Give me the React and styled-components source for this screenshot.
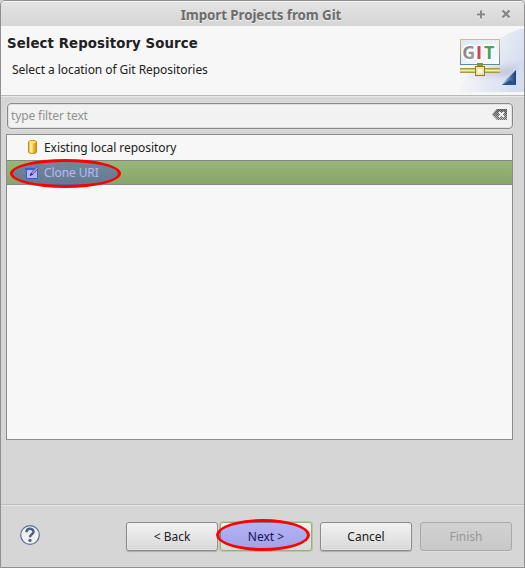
import React from "react";
import styled, { createGlobalStyle, css } from "styled-components";

const Global = createGlobalStyle`
  * { box-sizing: border-box; }
  html, body { margin: 0; padding: 0; background: #d6d6d6; }
`;

const Window = styled.main`
  width: 525px;
  height: 568px;
  display: flex;
  flex-direction: column;
  overflow: hidden;
  border: 1px solid #8f8f8f;
  border-radius: 5px 5px 0 0;
  background: #d6d6d6;
  color: #212121;
  font: 12px/18px "Noto Sans", sans-serif;
  letter-spacing: -0.06px;
`;

const TitleBar = styled.header`
  flex: none;
  height: 25px;
  display: grid;
  grid-template-columns: 1fr auto 1fr;
  align-items: center;
  padding: 2px 11px 0 8px;
  border-top: 1px solid #f6f6f6;
  background: linear-gradient(#e4e4e4, #d5d5d5);
`;

const Title = styled.h1`
  grid-column: 2;
  margin: 0;
  color: #6c6c6c;
  font-size: 13.3px;
  line-height: 20px;
  font-weight: 700;
  letter-spacing: -0.05px;
  text-shadow: 0 1px #f1f1f1;
`;

const WindowControls = styled.div`
  display: flex;
  justify-content: flex-end;
  gap: 11px;
`;

const Banner = styled.section`
  flex: none;
  height: 71px;
  display: flex;
  justify-content: space-between;
  background: #f7f7f7;
  border-bottom: 1px solid #e9e9e9;
  box-shadow: inset 0 -1px #bababa;
`;

const BannerText = styled.div`
  padding: 9px 0 0 6px;
`;

const Heading = styled.h2`
  margin: 0;
  font: 700 13.3px/18px "DejaVu Sans", sans-serif;
  letter-spacing: 0.1px;
`;

const Description = styled.p`
  margin: 8px 0 0 5px;
  line-height: 18px;
`;

const Filter = styled.div`
  flex: none;
  height: 26px;
  margin: 6px 11px 0 6px;
  padding: 0 4px 0 3px;
  display: flex;
  align-items: center;
  justify-content: space-between;
  border: 1px solid #898989;
  border-radius: 4px;
  background: #f2f2f2;
  box-shadow: inset 0 0 0 1px #e2e2e2, 0 0 0 1px #dedede;
  color: #919191;
  letter-spacing: -0.12px;
`;

const Tree = styled.div`
  flex: none;
  height: 306px;
  margin: 5px 11px 0 5px;
  border: 1px solid #8c8c8c;
  background: #f7f7f7;
`;

const TreeRow = styled.div`
  position: relative;
  height: 25px;
  display: flex;
  align-items: center;
  gap: 5px;
  padding-left: 18px;
  ${(p) => p.$selected && css`
    border-top: 1px solid #858585;
    border-bottom: 1px solid #858585;
    background: linear-gradient(#98b77b, #88a56a);
    color: #f7f7f7;
    letter-spacing: -0.1px;
  `}
`;

const Footer = styled.footer`
  margin-top: auto;
  height: 63px;
  display: flex;
  align-items: flex-start;
  padding: 17px 12px 0 18px;
  border-top: 1px solid #bdbdbd;
  box-shadow: inset 0 1px #e6e6e6;
`;

const HelpButton = styled.span`
  padding-top: 2px;
`;

const Buttons = styled.div`
  margin-left: auto;
  display: flex;
`;

const Button = styled.button`
  position: relative;
  width: 92px;
  height: 29px;
  margin: 0 0 0 ${(p) => p.$gap || 0}px;
  padding: 0;
  border: 1px solid #8c8c8c;
  border-radius: 3px;
  background: linear-gradient(#f2f2f2, #d9d9d9);
  box-shadow: inset 0 0 0 1px #f0f0f066, 0 1px 1px #aaa;
  color: #212121;
  font: 12px/18px "Noto Sans", sans-serif;
  ${(p) => p.$focused && css`
    border-color: #9aad83;
    box-shadow: 0 0 0 1px #b1cd94;
  `}
  &:disabled {
    border-color: #a9a9a9;
    background: linear-gradient(#d1d1d1, #c9c9c9);
    box-shadow: 0 1px #dfdfdf;
    color: #979797;
  }
`;

const Highlight = styled.span`
  position: absolute;
  z-index: 2;
  left: ${(p) => p.$x}px;
  top: ${(p) => p.$y}px;
  width: ${(p) => p.$w}px;
  height: ${(p) => p.$h}px;
  border: 3px solid #f00;
  border-radius: 50%;
  background: rgba(0, 0, 255, 0.26);
  pointer-events: none;
`;

const Icon = styled.svg`
  flex: none;
  display: block;
`;

const BannerArt = () => (
  <Icon width="67" height="66" viewBox="-1 0 67 66">
    <defs>
      <linearGradient id="sky" x1="0" x2="1" y1=".3" y2=".6">
        <stop offset="0" stopColor="#e4e9f6" stopOpacity="0" />
        <stop offset="1" stopColor="#d3dcf0" />
      </linearGradient>
      <linearGradient id="screen" x1="0" y1="0" x2="1" y2="1">
        <stop stopColor="#dbe8f4" /><stop offset="1" stopColor="#fbfcfe" />
      </linearGradient>
      <linearGradient id="frame" x1="0" y1="0" x2="0" y2="1">
        <stop stopColor="#e5b876" /><stop offset="1" stopColor="#608c8c" />
      </linearGradient>
      <linearGradient id="corner" x1="0" y1="0" x2="1" y2="0">
        <stop stopColor="#b9dcf3" /><stop offset=".55" stopColor="#5582b6" /><stop offset="1" stopColor="#203d7a" />
      </linearGradient>
      <linearGradient id="silver" x1="0" y1="0" x2="1" y2="1">
        <stop stopColor="#777" /><stop offset="1" stopColor="#aaa" />
      </linearGradient>
      <filter id="soft" x="-30%" y="-100%" width="160%" height="300%"><feGaussianBlur stdDeviation="3" /></filter>
    </defs>
    <path d="M0 66C10 48 32 8 67 2V66Z" fill="url(#sky)" />
    <path d="M15 66C25 40 43 27 67 22V66Z" fill="url(#sky)" opacity=".6" />
    <path d="M5 49L48 41L62 38L52 50Z" fill="#a8a0bd" opacity=".45" filter="url(#soft)" />
    <rect x="2.5" y="13.5" width="39" height="25" fill="url(#screen)" stroke="url(#frame)" />
    <g fontFamily="Noto Sans, sans-serif" fontWeight="700" fontSize="18">
      <g stroke="#fff" strokeWidth="3" paintOrder="stroke">
        <text x="4.3" y="33" fill="url(#silver)">G</text>
        <text x="26" y="33" fill="#4aa25b">T</text>
      </g>
      <rect x="18.5" y="19" width="5" height="15" fill="#fff" />
      <rect x="19.5" y="20" width="3" height="13" fill="#bd4f58" />
    </g>
    <path d="M19 38.5H25" stroke="#968c3a" strokeWidth="3" />
    <path d="M2 44.5H42" stroke="#a99b36" strokeWidth="5" />
    <path d="M2 44.5H42" stroke="#f0ecb8" strokeWidth="2" />
    <rect x="17.5" y="40.5" width="9" height="9" fill="#fff3bd" stroke="#8b793c" />
    <rect x="19" y="42" width="6" height="6" fill="#fffbe5" stroke="#e9d28a" />
    <path d="M43 59L58 44V59Z" fill="url(#corner)" />
    <path d="M44 59L52 54L58 58V59Z" fill="#294f8c" />
  </Icon>
);

const ClearIcon = () => (
  <Icon width="16" height="14" viewBox="0 0 16 14">
    <defs>
      <pattern id="dots" width="2" height="2" patternUnits="userSpaceOnUse">
        <path d="M0 0h1v1H0zM1 1h1v1H1z" fill="#222" />
      </pattern>
      <linearGradient id="shade" x1="0" x2="0" y1="0" y2="1"><stop stopColor="#333" /><stop offset="1" stopColor="#aaa" /></linearGradient>
    </defs>
    <path d="M0 5.5L5 0H15V11H5Z" fill="url(#shade)" opacity=".6" />
    <path d="M0 5.5L5 0H15V11H5Z" fill="url(#dots)" opacity=".55" />
    <path d="M7 3L12 8M12 3L7 8" stroke="#f4f4f4" strokeWidth="2" />
  </Icon>
);

const RepositoryIcon = () => (
  <Icon width="14" height="16" viewBox="0 0 14 16">
    <defs>
      <linearGradient id="gold"><stop stopColor="#dda925" /><stop offset=".3" stopColor="#fff4ac" /><stop offset=".65" stopColor="#edbb2c" /><stop offset="1" stopColor="#c98911" /></linearGradient>
    </defs>
    <path d="M3.5 2Q3.5 .5 7.5 .5T11.5 2V12Q11.5 13.5 7.5 13.5T3.5 12Z" fill="url(#gold)" stroke="#c48b18" />
    <ellipse cx="7.5" cy="2.2" rx="3.3" ry="1.2" fill="#ffe56d" />
  </Icon>
);

const CloneIcon = () => (
  <Icon width="14" height="16" viewBox="0 0 14 16">
    <path d="M1.5 3.5H12.5V13.5H1.5Z" fill="#f4f6ff" stroke="#4e78bb" />
    <path d="M0 3H9V5H0Z" fill="#477ed1" />
    <path d="M5.5 10.5L6.5 7.5L12 1.5L13.7 3L8.5 8.8Z" fill="#dac6c6" stroke="#75656f" strokeWidth=".8" />
    <path d="M4.5 11L6 8L8.2 9.5Z" fill="#3d354b" />
  </Icon>
);

const HelpIcon = () => (
  <Icon width="22" height="22" viewBox="0 0 22 22">
    <circle cx="11" cy="11" r="9.3" fill="#f0f0f0" stroke="#596f93" strokeWidth="1.2" />
    <path d="M7.5 8.3C7.5 3.7 14.5 3.8 14.5 7.8C14.5 10.4 11 10.3 11 13.3" fill="none" stroke="#4b618a" strokeWidth="2.5" />
    <circle cx="11" cy="16.4" r="1.6" fill="#4b618a" />
  </Icon>
);

export default function App() {
  return (
    <>
      <Global />
      <Window>
        <TitleBar>
          <Title>Import Projects from Git</Title>
          <WindowControls>
            <Icon width="14" height="14" viewBox="0 0 14 14"><path d="M3 7.5H11M7 3.5V11.5" stroke="#f2f2f2" strokeWidth="2" /><path d="M3 6.5H11M7 2.5V10.5" stroke="#888" strokeWidth="2" /></Icon>
            <Icon width="14" height="14" viewBox="0 0 14 14"><path d="M3.5 3.5L10.5 10.5M10.5 3.5L3.5 10.5" stroke="#f2f2f2" strokeWidth="2.4" /><path d="M3.5 2.5L10.5 9.5M10.5 2.5L3.5 9.5" stroke="#888" strokeWidth="2.4" /></Icon>
          </WindowControls>
        </TitleBar>
        <Banner>
          <BannerText>
            <Heading>Select Repository Source</Heading>
            <Description>Select a location of Git Repositories</Description>
          </BannerText>
          <BannerArt />
        </Banner>
        <Filter>type filter text<ClearIcon /></Filter>
        <Tree>
          <TreeRow><RepositoryIcon />Existing local repository</TreeRow>
          <TreeRow $selected>
            <CloneIcon />Clone URI
            <Highlight $x={3} $y={-2} $w={111} $h={29} />
          </TreeRow>
        </Tree>
        <Footer>
          <HelpButton><HelpIcon /></HelpButton>
          <Buttons>
            <Button>&lt; Back</Button>
            <Button $gap={2} $focused>Next &gt;<Highlight $x={-5} $y={-4} $w={94} $h={32} /></Button>
            <Button $gap={8}>Cancel</Button>
            <Button $gap={8} disabled>Finish</Button>
          </Buttons>
        </Footer>
      </Window>
    </>
  );
}
